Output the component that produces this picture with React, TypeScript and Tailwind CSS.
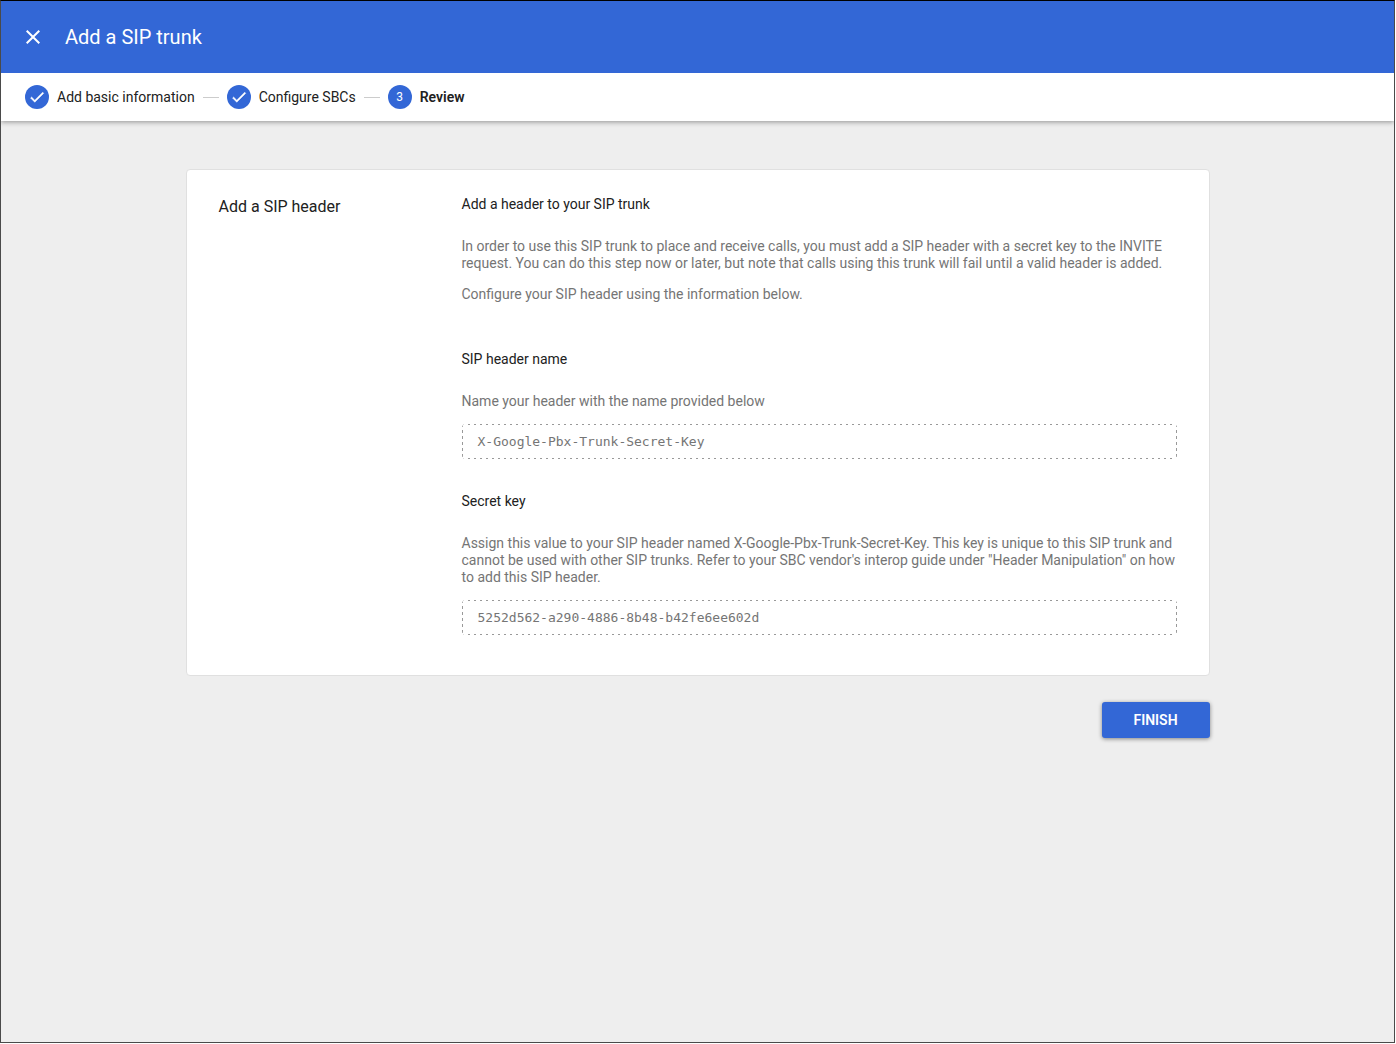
import React from "react";

function Check() {
  return (
    <span className="flex size-6 items-center justify-center rounded-full bg-[#3367d6]">
      <svg viewBox="0 0 24 24" className="size-4.5 fill-white stroke-white stroke-[0.6]" aria-hidden="true">
        <path d="M9 16.17 4.83 12l-1.42 1.41L9 19 21 7l-1.41-1.41z" />
      </svg>
    </span>
  );
}

function Step({ label, number, current }: { label: string; number?: number; current?: boolean }) {
  return (
    <li className="flex items-center gap-2" aria-current={current ? "step" : undefined}>
      {number ? (
        <span className="flex size-6 items-center justify-center rounded-full bg-[#3367d6] text-xs text-white">
          {number}
        </span>
      ) : (
        <Check />
      )}
      <span className={current ? "font-semibold" : ""}>{label}</span>
    </li>
  );
}

function CodeBox({ children }: { children: React.ReactNode }) {
  return (
    <div className="mt-3.5 rounded-sm bg-[repeating-linear-gradient(90deg,#999_0_2px,transparent_2px_6px),repeating-linear-gradient(90deg,#999_0_2px,transparent_2px_6px),repeating-linear-gradient(#999_0_3px,transparent_3px_6px),repeating-linear-gradient(#999_0_3px,transparent_3px_6px)] bg-[length:100%_1px,100%_1px,1px_100%,1px_100%] bg-[position:top,bottom,left,right] bg-no-repeat px-4 py-[9px] font-['DejaVu_Sans_Mono',monospace] text-[13px] leading-[17px]">
      {children}
    </div>
  );
}

export default function App() {
  return (
    <div className="flex min-h-screen flex-col bg-white pr-px pb-px font-[Roboto,sans-serif] text-sm text-[#212121]">
      <div className="flex flex-1 flex-col border border-[#4a4a4a] border-t-black bg-[#eee]">
        <header className="flex h-18 items-center gap-5 bg-[#3367d6] px-5 text-white">
          <button type="button" aria-label="Close" className="size-6">
            <svg viewBox="0 0 24 24" className="size-6 fill-current" aria-hidden="true">
              <path d="M19 6.41 17.59 5 12 10.59 6.41 5 5 6.41 10.59 12 5 17.59 6.41 19 12 13.41 17.59 19 19 17.59 13.41 12z" />
            </svg>
          </button>
          <h1 className="text-xl">Add a SIP trunk</h1>
        </header>
        <ol className="flex h-12 items-center gap-2 bg-white px-6 shadow-[0_1px_5px_rgba(0,0,0,0.4)] [clip-path:inset(0_0_-12px_0)]">
          <Step label="Add basic information" />
          <li aria-hidden="true" className="h-px w-4 bg-[#ccc]" />
          <Step label="Configure SBCs" />
          <li aria-hidden="true" className="h-px w-4 bg-[#ccc]" />
          <Step label="Review" number={3} current />
        </ol>
        <main className="mx-auto mt-12 flex w-full max-w-[1024px] flex-col">
          <section className="flex rounded-sm border border-[#e0e0e0] bg-white px-8 pt-[26px] pb-10">
            <h2 className="w-[243px] shrink-0 text-base leading-[22px]">Add a SIP header</h2>
            <div className="flex-1 leading-[17px] text-[#757575]">
              <h3 className="text-[#212121]">Add a header to your SIP trunk</h3>
              <p className="mt-[25px]">
                In order to use this SIP trunk to place and receive calls, you must add a SIP header with a secret key to the INVITE request. You can do this step now or later, but note that calls using this trunk will fail until a valid header is added.
              </p>
              <p className="mt-3.5">Configure your SIP header using the information below.</p>
              <h3 className="mt-12 text-[#212121]">SIP header name</h3>
              <p className="mt-[25px]">Name your header with the name provided below</p>
              <CodeBox>X-Google-Pbx-Trunk-Secret-Key</CodeBox>
              <h3 className="mt-[34px] text-[#212121]">Secret key</h3>
              <p className="mt-[25px]">
                Assign this value to your SIP header named X-Google-Pbx-Trunk-Secret-Key. This key is unique to this SIP trunk and cannot be used with other SIP trunks. Refer to your SBC vendor's interop guide under "Header Manipulation" on how to add this SIP header.
              </p>
              <CodeBox>5252d562-a290-4886-8b48-b42fe6ee602d</CodeBox>
            </div>
          </section>
          <button type="button" className="mt-[26px] h-9 w-[108px] self-end rounded-[3px] bg-[#3367d6] font-semibold text-white shadow-[0_1px_4px_rgba(0,0,0,0.45)]">
            FINISH
          </button>
        </main>
      </div>
    </div>
  );
}
